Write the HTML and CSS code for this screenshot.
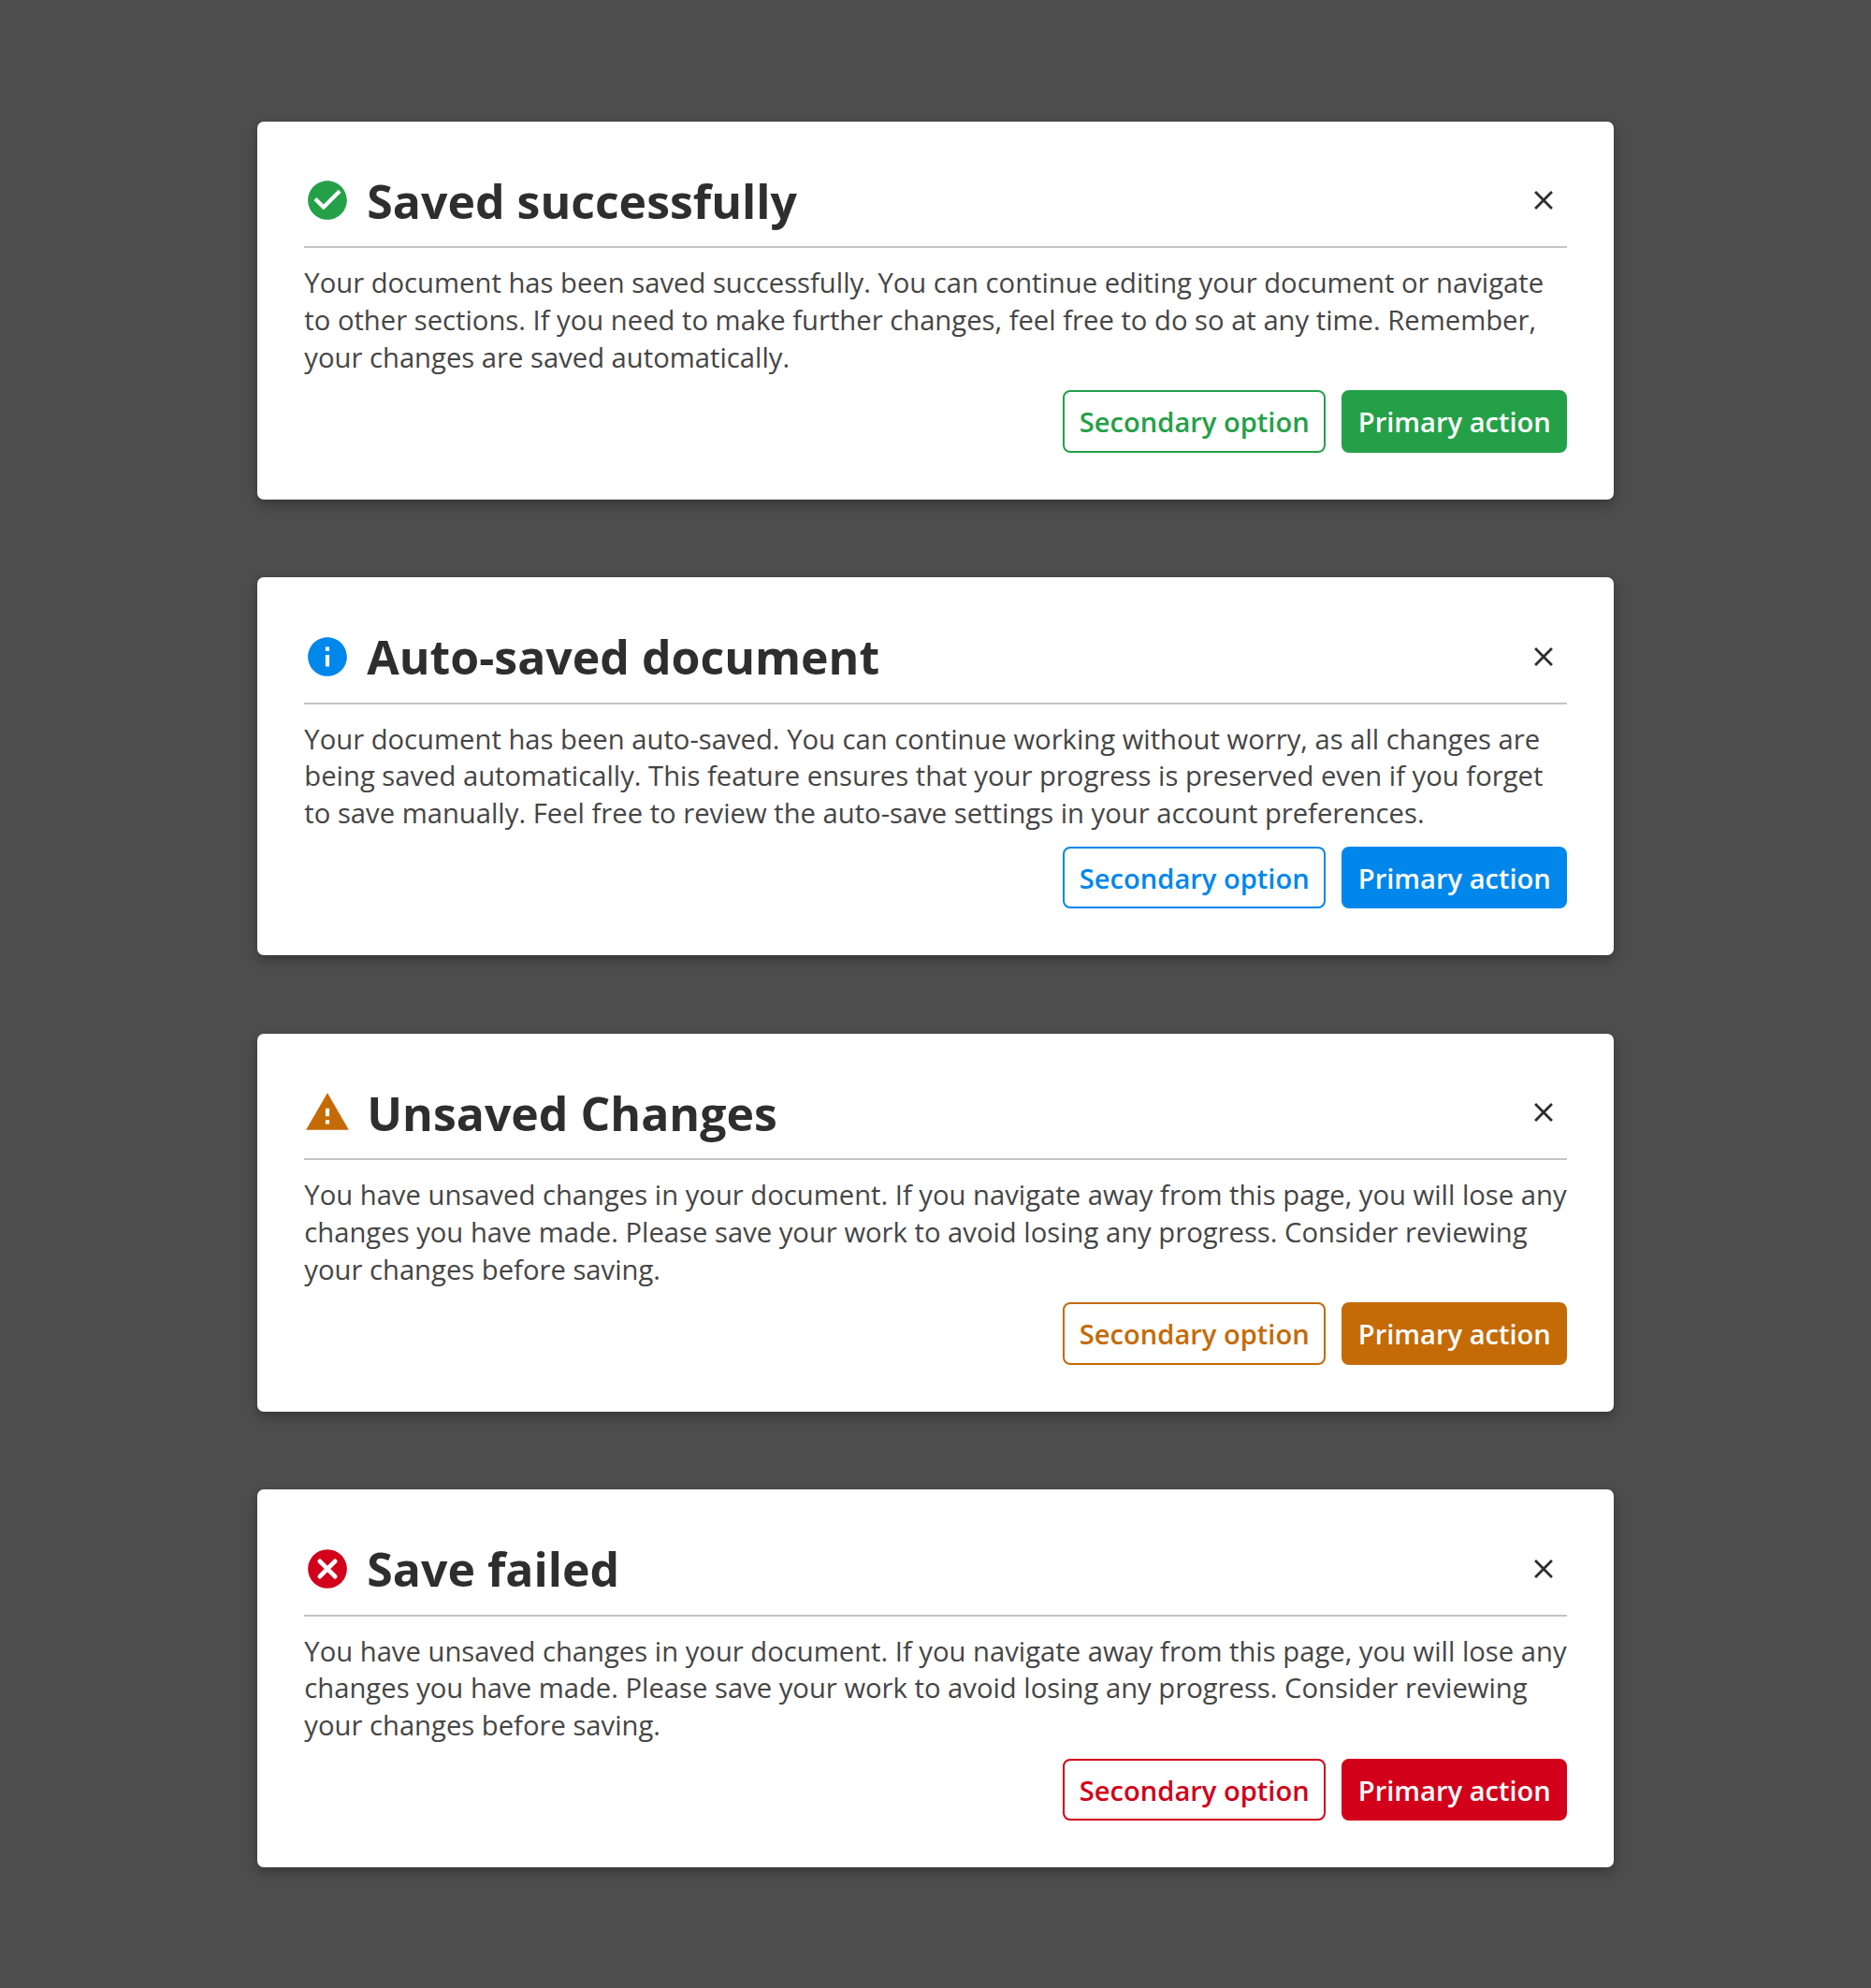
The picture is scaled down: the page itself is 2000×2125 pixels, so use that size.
FILE: index.html
```html
<!DOCTYPE html>
<html lang="en">
<head>
<meta charset="utf-8">
<title>Dialogs</title>
<link rel="stylesheet" href="styles.css">
</head>
<body>
<main class="dialogs">
  <section class="dialog success">
    <header class="dialog-header">
      <svg class="status-icon" viewBox="0 0 24 24"><path d="M12 2C6.48 2 2 6.48 2 12s4.48 10 10 10 10-4.48 10-10S17.52 2 12 2zm-2 15l-5-5 1.41-1.41L10 14.17l7.59-7.59L19 8l-9 9z"/></svg>
      <h2 class="title">Saved successfully</h2>
      <button class="close" aria-label="Close"><svg viewBox="0 0 24 24"><path d="M19 6.41L17.59 5 12 10.59 6.41 5 5 6.41 10.59 12 5 17.59 6.41 19 12 13.41 17.59 19 19 17.59 13.41 12z"/></svg></button>
    </header>
    <p class="message">Your document has been saved successfully. You can continue editing your document or navigate<br>to other sections. If you need to make further changes, feel free to do so at any time. Remember,<br>your changes are saved automatically.</p>
    <div class="actions"><button class="btn secondary">Secondary option</button><button class="btn primary">Primary action</button></div>
  </section>
  <section class="dialog info">
    <header class="dialog-header">
      <svg class="status-icon" viewBox="0 0 24 24"><path d="M12 2C6.48 2 2 6.48 2 12s4.48 10 10 10 10-4.48 10-10S17.52 2 12 2zm1 15h-2v-6h2v6zm0-8h-2V7h2v2z"/></svg>
      <h2 class="title">Auto-saved document</h2>
      <button class="close" aria-label="Close"><svg viewBox="0 0 24 24"><path d="M19 6.41L17.59 5 12 10.59 6.41 5 5 6.41 10.59 12 5 17.59 6.41 19 12 13.41 17.59 19 19 17.59 13.41 12z"/></svg></button>
    </header>
    <p class="message">Your document has been auto-saved. You can continue working without worry, as all changes are<br>being saved automatically. This feature ensures that your progress is preserved even if you forget<br>to save manually. Feel free to review the auto-save settings in your account preferences.</p>
    <div class="actions"><button class="btn secondary">Secondary option</button><button class="btn primary">Primary action</button></div>
  </section>
  <section class="dialog warning">
    <header class="dialog-header">
      <svg class="status-icon" viewBox="0 0 24 24"><path d="M1 21h22L12 2 1 21zm12-3h-2v-2h2v2zm0-4h-2v-4h2v4z"/></svg>
      <h2 class="title">Unsaved Changes</h2>
      <button class="close" aria-label="Close"><svg viewBox="0 0 24 24"><path d="M19 6.41L17.59 5 12 10.59 6.41 5 5 6.41 10.59 12 5 17.59 6.41 19 12 13.41 17.59 19 19 17.59 13.41 12z"/></svg></button>
    </header>
    <p class="message">You have unsaved changes in your document. If you navigate away from this page, you will lose any<br>changes you have made. Please save your work to avoid losing any progress. Consider reviewing<br>your changes before saving.</p>
    <div class="actions"><button class="btn secondary">Secondary option</button><button class="btn primary">Primary action</button></div>
  </section>
  <section class="dialog error">
    <header class="dialog-header">
      <svg class="status-icon" viewBox="0 0 24 24"><circle cx="12" cy="12" r="10"/><path class="cross" d="M8.1 8.1l7.8 7.8M15.9 8.1l-7.8 7.8"/></svg>
      <h2 class="title">Save failed</h2>
      <button class="close" aria-label="Close"><svg viewBox="0 0 24 24"><path d="M19 6.41L17.59 5 12 10.59 6.41 5 5 6.41 10.59 12 5 17.59 6.41 19 12 13.41 17.59 19 19 17.59 13.41 12z"/></svg></button>
    </header>
    <p class="message">You have unsaved changes in your document. If you navigate away from this page, you will lose any<br>changes you have made. Please save your work to avoid losing any progress. Consider reviewing<br>your changes before saving.</p>
    <div class="actions"><button class="btn secondary">Secondary option</button><button class="btn primary">Primary action</button></div>
  </section>
</main>
</body>
</html>
```
FILE: styles.css
```css
* { box-sizing: border-box; }
body {
  margin: 0;
  background: #4d4d4d;
  font-family: "Open Sans", "Noto Sans", sans-serif;
}
.dialogs {
  height: 2125px;
  padding-top: 129.5px;
  padding-left: 0.6px;
  display: flex;
  flex-direction: column;
  align-items: center;
  gap: 83.5px;
}
.dialog {
  width: 1450px;
  height: 404px;
  flex: none;
  padding: 50px;
  background: #fff;
  border-radius: 7px;
  box-shadow: 0 5px 13px rgba(0, 0, 0, .3);
}
.success { --tone: #24a148; }
.info { --tone: #0087eb; }
.warning { --tone: #c46b08; }
.error { --tone: #d2001a; }
.dialog-header {
  height: 85.5px;
  padding-bottom: 14.5px;
  border-bottom: 2px solid #c4c4c4;
  display: flex;
  align-items: center;
}
.status-icon {
  width: 50px;
  height: 50px;
  margin-right: 17px;
  fill: var(--tone);
}
.cross {
  fill: none;
  stroke: #fff;
  stroke-width: 2.3;
  stroke-linecap: round;
}
.title {
  margin: 0;
  padding-top: 1.5px;
  flex: 1;
  font-size: 49.98px;
  line-height: 68px;
  font-weight: 700;
  color: #2e2e2e;
}
.close {
  width: 50px;
  height: 50px;
  padding: 0;
  border: 0;
  background: none;
  display: grid;
  place-items: center;
}
.close svg {
  width: 34px;
  height: 34px;
  fill: #2e2e2e;
}
.message {
  margin: 18px 0 15px;
  font-size: 29.22px;
  line-height: 39.75px;
  color: #454545;
  white-space: nowrap;
}
.actions {
  display: flex;
  justify-content: flex-end;
  gap: 17px;
}
.btn {
  height: 66.5px;
  padding: 1px 0 0;
  border: 2px solid var(--tone);
  border-radius: 8px;
  font-family: inherit;
  font-size: 29.1px;
  font-weight: 600;
  line-height: 40px;
}
.secondary {
  width: 281px;
  background: #fff;
  color: var(--tone);
}
.primary {
  width: 241px;
  background: var(--tone);
  color: #fff;
}
```
